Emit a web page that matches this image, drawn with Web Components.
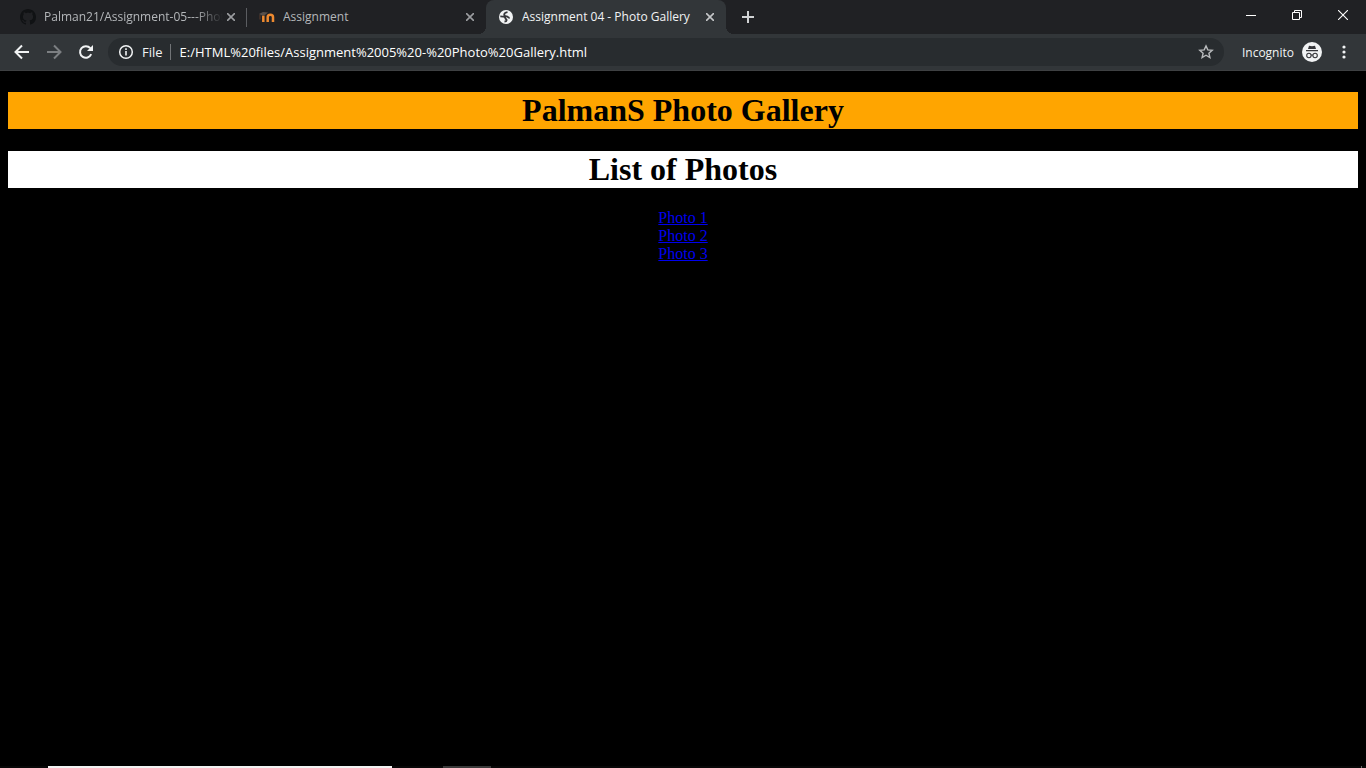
<!DOCTYPE html>
<html lang="en">
<head>
<meta charset="utf-8">
<title>Assignment 04 - Photo Gallery</title>
<style>
  html, body { margin: 0; background: #000; }
</style>
</head>
<body>
<browser-window></browser-window>

<template id="tpl-window">
  <style>
    :host { display: flex; flex-direction: column; min-height: 100vh; background: #000; font-family: "Open Sans", "Noto Sans", sans-serif; }
    gallery-page { flex: 1; }
    svg { display: block; }
  </style>
  <tab-strip>
    <browser-tab label="Palman21/Assignment-05---Phot" divided>
      <svg slot="icon" width="16" height="16" viewBox="0 0 16 16"><path fill="#101214" d="M8 0C3.58 0 0 3.58 0 8c0 3.54 2.29 6.53 5.47 7.59.4.07.55-.17.55-.38 0-.19-.01-.82-.01-1.49-2.01.37-2.53-.49-2.69-.94-.09-.23-.48-.94-.82-1.13-.28-.15-.68-.52-.01-.53.63-.01 1.08.58 1.23.82.72 1.21 1.87.87 2.33.66.07-.52.28-.87.51-1.07-1.78-.2-3.64-.89-3.64-3.95 0-.87.31-1.59.82-2.15-.08-.2-.36-1.02.08-2.12 0 0 .67-.21 2.2.82.64-.18 1.32-.27 2-.27s1.36.09 2 .27c1.53-1.04 2.2-.82 2.2-.82.44 1.1.16 1.92.08 2.12.51.56.82 1.27.82 2.15 0 3.07-1.87 3.75-3.65 3.95.29.25.54.73.54 1.48 0 1.07-.01 1.93-.01 2.2 0 .21.15.46.55.38A8.01 8.01 0 0 0 16 8c0-4.42-3.58-8-8-8z"/></svg>
    </browser-tab>
    <browser-tab label="Assignment">
      <svg slot="icon" width="16" height="16" viewBox="0 0 16 16"><path d="M4.300 13V6.500M8.700 13V8c0-3 5.300-3 5.300 0v5" fill="none" stroke="#ee8a30" stroke-width="2.500"/><path d="M0 5l4-2 5 .5-3 2.500-3 .5z" fill="#57504b"/><path d="M1 5.500v5" stroke="#5a3c2c" stroke-width="1"/></svg>
    </browser-tab>
    <browser-tab label="Assignment 04 - Photo Gallery" active>
      <svg slot="icon" width="16" height="16" viewBox="0 0 16 16"><circle cx="8" cy="8" r="7" fill="#f1f3f4"/><path d="M9.500 3.200C7.500 3.500 6.200 4.200 6.200 5.700c0 1.400 1.200 1.600 2.500 1.700 1.300.1 1.500 1.500 3 1.400M2.300 7.300c2.400 0 4.700.5 5 1.700.3 1.500 1.500 1 1.300 2.300-.1.800-1 1.200-2.100 1.200" fill="none" stroke="#35363a" stroke-width="1.800"/></svg>
    </browser-tab>
  </tab-strip>
  <tool-bar></tool-bar>
  <gallery-page heading="PalmanS Photo Gallery" subheading="List of Photos">
    <photo-link href="#photo1">Photo 1</photo-link>
    <photo-link href="#photo2">Photo 2</photo-link>
    <photo-link href="#photo3">Photo 3</photo-link>
  </gallery-page>
  <task-edge></task-edge>
</template>

<template id="tpl-strip">
  <style>
    :host { display: flex; height: 34px; background: #202124; padding-left: 8px; }
    .tabs { display: flex; flex: 0 1 718px; min-width: 0; }
    .spacer { flex: 1; }
    button { border: 0; padding: 0; background: none; color: #fff; display: grid; place-items: center; flex: none; }
    .new { width: 44px; color: #d0d2d4; }
    .win { width: 46px; height: 29px; }
    svg { display: block; }
  </style>
  <div class="tabs"><slot></slot></div>
  <button class="new" aria-label="New tab"><svg width="12" height="12" viewBox="0 0 12 12"><path d="M6 0v12M0 6h12" stroke="currentColor" stroke-width="2"/></svg></button>
  <div class="spacer"></div>
  <button class="win" aria-label="Minimize"><svg width="10" height="10" viewBox="0 0 10 10"><path d="M0 5.500h10" stroke="currentColor"/></svg></button>
  <button class="win" aria-label="Restore"><svg width="10" height="10" viewBox="0 0 10 10"><path d="M.5 2.500h7v7h-7zM2.500 2.500v-2h7v7h-2" stroke="currentColor" fill="none"/></svg></button>
  <button class="win" aria-label="Close window"><svg width="10" height="10" viewBox="0 0 10 10"><path d="M0 0l10 10M10 0L0 10" stroke="currentColor" stroke-width="1.100"/></svg></button>
</template>

<template id="tpl-tab">
  <style>
    :host { display: flex; position: relative; flex: 0 1 239px; min-width: 0; box-sizing: border-box; align-items: center; padding: 0 8px 0 12px; color: #b4b7ba; font-size: 12px; line-height: 16px; }
    :host([active]) { flex-basis: 240px; background: #323639; color: #f1f3f4; border-radius: 8px 8px 0 0; }
    :host([active])::before, :host([active])::after { content: ""; position: absolute; bottom: 0; width: 8px; height: 8px; }
    :host([active])::before { right: 100%; background: radial-gradient(circle at 0 0, #202124 8px, #323639 8px); }
    :host([active])::after { left: 100%; background: radial-gradient(circle at 100% 0, #202124 8px, #323639 8px); }
    :host([divided])::after { content: ""; position: absolute; right: 0; top: 8px; width: 1px; height: 19px; background: #5b5d61; }
    .title { flex: 1; min-width: 0; margin-left: 8px; overflow: hidden; white-space: nowrap; }
    :host([divided]) .title { -webkit-mask-image: linear-gradient(90deg, #000 calc(100% - 28px), transparent); mask-image: linear-gradient(90deg, #000 calc(100% - 28px), transparent); }
    button { flex: none; border: 0; padding: 0; background: none; color: #9b9da0; width: 16px; height: 16px; display: grid; place-items: center; }
    :host([active]) button { color: #c4c6c8; }
  </style>
  <slot name="icon"></slot>
  <span class="title"></span>
  <button aria-label="Close tab"><svg width="8" height="8" viewBox="0 0 8 8"><path d="M0 0l8 8M8 0L0 8" stroke="currentColor" stroke-width="1.600"/></svg></button>
</template>

<template id="tpl-toolbar">
  <style>
    :host { display: flex; align-items: center; height: 36px; background: #323639; border-bottom: 1px solid #3e4042; padding: 0 6px; color: #f1f3f4; }
    button { flex: none; border: 0; padding: 0; background: none; color: inherit; font: inherit; display: grid; place-items: center; width: 32px; height: 28px; }
    button:disabled { color: #7c7f82; }
    svg { display: block; }
    form { flex: 1; min-width: 0; display: flex; align-items: center; height: 28px; margin: 0 18px 0 6px; padding: 0 10px; border-radius: 14px; background: #282c2f; font-size: 14px; }
    form button { width: 16px; }
    form .info { display: flex; align-items: center; gap: 8px; width: auto; font-size: 13px; }
    .rule { width: 1px; height: 16px; background: #717477; margin: 0 9px 0 7px; }
    input { flex: 1; min-width: 0; border: 0; padding: 0; background: none; color: #fff; font: inherit; font-size: 13px; line-height: 20px; outline: none; }
    .star { color: #b9bbbd; }
    .profile { display: flex; width: auto; gap: 8px; font-size: 12px; margin-right: 6px; }
    .more { width: 32px; }
  </style>
  <button aria-label="Back"><svg width="16" height="16" viewBox="0 0 16 16"><path d="M15 8H2M8 1.500L1.500 8 8 14.500" stroke="currentColor" stroke-width="2" fill="none"/></svg></button>
  <button aria-label="Forward" disabled><svg width="16" height="16" viewBox="0 0 16 16"><path d="M1 8h13M8 1.500L14.500 8 8 14.500" stroke="currentColor" stroke-width="2" fill="none"/></svg></button>
  <button aria-label="Reload"><svg width="16" height="16" viewBox="0 0 16 16"><path d="M13.200 10.200A5.800 5.800 0 1 1 12.300 4.200" stroke="currentColor" stroke-width="2" fill="none"/><path d="M15 1v6H9z" fill="currentColor"/></svg></button>
  <form>
    <button class="info" type="button"><svg width="16" height="16" viewBox="0 0 16 16"><circle cx="8" cy="8" r="6.300" fill="none" stroke="currentColor" stroke-width="1.500"/><path d="M8 7v4.500M8 4.300v1.700" stroke="currentColor" stroke-width="1.600"/></svg><span>File</span></button>
    <span class="rule"></span>
    <input aria-label="Address" value="E:/HTML%20files/Assignment%2005%20-%20Photo%20Gallery.html" spellcheck="false">
    <button class="star" type="button" aria-label="Bookmark"><svg width="16" height="16" viewBox="0 0 16 16"><path d="M8 1.900l1.800 4 4.400.4-3.300 2.900 1 4.300L8 11.200l-3.900 2.300 1-4.300-3.300-2.900 4.400-.4z" fill="none" stroke="currentColor" stroke-width="1.400"/></svg></button>
  </form>
  <button class="profile"><span>Incognito</span><svg width="20" height="20" viewBox="0 0 20 20"><circle cx="10" cy="10" r="10" fill="#f1f3f4"/><path d="M6 7l1-3.300 3 .6 3-.6L14 7zM4 8h12v1.200H4z" fill="#35363a"/><circle cx="6.900" cy="13.500" r="2.200" fill="none" stroke="#35363a" stroke-width="1.100"/><circle cx="13.100" cy="13.500" r="2.200" fill="none" stroke="#35363a" stroke-width="1.100"/><path d="M9 13.200q1-.6 2 0" fill="none" stroke="#35363a"/></svg></button>
  <button class="more" aria-label="Menu"><svg width="4" height="14" viewBox="0 0 4 14"><g fill="currentColor"><circle cx="2" cy="2" r="1.600"/><circle cx="2" cy="7" r="1.600"/><circle cx="2" cy="12" r="1.600"/></g></svg></button>
</template>

<template id="tpl-page">
  <style>
    :host { display: block; padding: 21px 8px; background: #000; text-align: center; font-family: "Liberation Serif", serif; }
    h1 { margin: 0 0 22px; font-size: 32px; line-height: 37px; font-weight: bold; color: #000; }
    .main { background: #ffa500; }
    .sub { background: #fff; margin-bottom: 21px; }
  </style>
  <h1 class="main"></h1>
  <h1 class="sub"></h1>
  <nav><slot></slot></nav>
</template>

<template id="tpl-link">
  <style>
    :host { display: block; font-size: 16px; line-height: 18px; }
    a { color: #0000ee; text-decoration: underline; }
  </style>
  <a><slot></slot></a>
</template>

<template id="tpl-edge">
  <style>
    :host { display: flex; height: 2px; background: #080808; padding: 0 4px 0 48px; }
    .search { width: 344px; background: #f2f2f2; }
    .app { width: 48px; margin-left: 51px; background: #3a3a3a; }
    .peek { width: 1px; margin-left: auto; background: #6a6a6a; }
  </style>
  <div class="search"></div><div class="app"></div><div class="peek"></div>
</template>

<script>
  class TemplateElement extends HTMLElement {
    constructor() {
      super();
      const tpl = document.getElementById(this.constructor.template);
      this.attachShadow({ mode: "open" }).append(tpl.content.cloneNode(true));
    }
  }
  class TabStrip extends TemplateElement { static template = "tpl-strip"; }
  class BrowserTab extends TemplateElement {
    static template = "tpl-tab";
    connectedCallback() {
      this.shadowRoot.querySelector(".title").textContent = this.getAttribute("label");
    }
  }
  class ToolBar extends TemplateElement { static template = "tpl-toolbar"; }
  class GalleryPage extends TemplateElement {
    static template = "tpl-page";
    connectedCallback() {
      this.shadowRoot.querySelector(".main").textContent = this.getAttribute("heading");
      this.shadowRoot.querySelector(".sub").textContent = this.getAttribute("subheading");
    }
  }
  class PhotoLink extends TemplateElement {
    static template = "tpl-link";
    connectedCallback() {
      this.shadowRoot.querySelector("a").href = this.getAttribute("href");
    }
  }
  class TaskEdge extends TemplateElement { static template = "tpl-edge"; }
  class BrowserWindow extends TemplateElement { static template = "tpl-window"; }

  customElements.define("tab-strip", TabStrip);
  customElements.define("browser-tab", BrowserTab);
  customElements.define("tool-bar", ToolBar);
  customElements.define("gallery-page", GalleryPage);
  customElements.define("photo-link", PhotoLink);
  customElements.define("task-edge", TaskEdge);
  customElements.define("browser-window", BrowserWindow);
</script>
</body>
</html>
